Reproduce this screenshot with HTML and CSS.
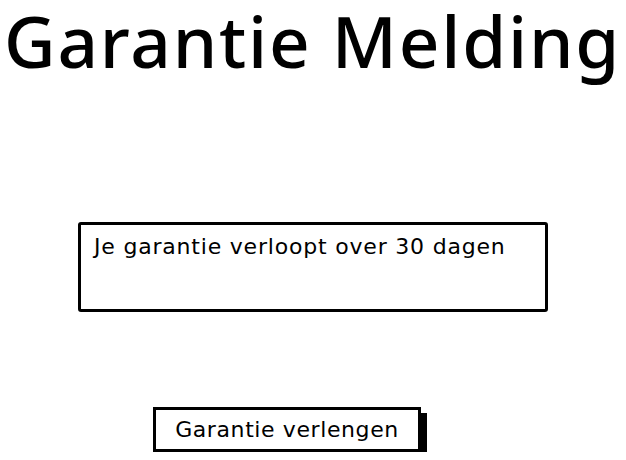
FILE: index.html
```html
<!DOCTYPE html>
<html lang="nl">
<head>
    <meta charset="UTF-8">
    <meta name="viewport" content="width=device-width, initial-scale=1.0">
    <title>Garantie Melding</title>
    <link rel="stylesheet" href="styles.css">
</head>
<body>
    <h1 class="title">Garantie Melding</h1>
    <div class="notice">
        <p class="notice-text">Je garantie verloopt over 30 dagen</p>
    </div>
    <div class="actions">
        <button class="extend-button">Garantie verlengen</button>
    </div>
</body>
</html>
```

FILE: styles.css
```css
body {
    font-family: "DejaVu Sans", "Noto Sans", sans-serif;
    margin: 0;
    padding: 0;
    background: #fff;
    color: #000;
}
.title {
    margin: 0;
    padding: 0 0 0 4px;
    font-family: "Noto Sans", "DejaVu Sans", sans-serif;
    font-size: 71px;
    font-weight: 500;
    line-height: 82px;
    letter-spacing: 1.8px;
    white-space: nowrap;
}
.notice {
    margin: 140px 0 0 78px;
    width: 464px;
    height: 84px;
    border: 3px solid #000;
    border-radius: 3px;
}
.notice-text {
    margin: 0;
    padding: 7px 0 0 13px;
    font-size: 22px;
    line-height: 30px;
    letter-spacing: 0.8px;
}
.actions {
    padding: 95px 0 0 153px;
}
.extend-button {
    width: 268px;
    height: 45px;
    padding: 0;
    border: 3px solid #000;
    border-radius: 0;
    background: #fff;
    box-shadow: 6px 6px 0 #000;
    font-family: inherit;
    font-size: 22px;
    letter-spacing: 0.6px;
    color: #000;
}
```
